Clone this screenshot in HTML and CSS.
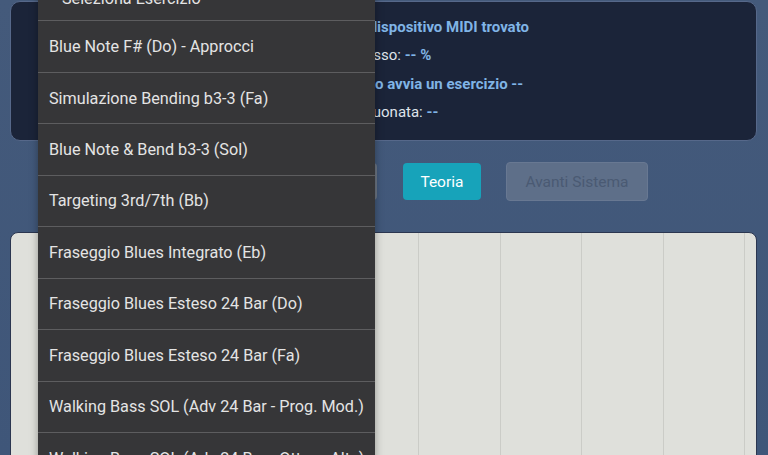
FILE: index.html
```html
<!DOCTYPE html>
<html lang="it">
<head>
<meta charset="utf-8">
<title>Blues Trainer</title>
<link rel="stylesheet" href="styles.css">
</head>
<body>
<div class="app">
  <section class="status-panel">
    <div class="status-lines">
      <p class="line status">Nessun dispositivo MIDI trovato</p>
      <p class="line info">Progresso: <span class="val">-- %</span></p>
      <p class="line status">-- Scegli o avvia un esercizio --</p>
      <p class="line info">Nota suonata: <span class="val">--</span></p>
    </div>
  </section>
  <div class="controls">
    <button class="btn btn-success">Avvia Esercizio</button>
    <button class="btn btn-secondary">Stop</button>
    <button class="btn btn-info">Teoria</button>
    <button class="btn btn-disabled" disabled>Avanti Sistema</button>
  </div>
  <section class="sheet">
    <div class="col"></div><div class="col"></div><div class="col"></div>
    <div class="col"></div><div class="col"></div><div class="col"></div>
    <div class="col"></div><div class="col"></div><div class="col"></div>
  </section>
</div>
<ul class="dropdown">
  <li class="opt">-- Seleziona Esercizio --</li>
  <li class="opt">Blue Note F# (Do) - Approcci</li>
  <li class="opt">Simulazione Bending b3-3 (Fa)</li>
  <li class="opt">Blue Note &amp; Bend b3-3 (Sol)</li>
  <li class="opt">Targeting 3rd/7th (Bb)</li>
  <li class="opt">Fraseggio Blues Integrato (Eb)</li>
  <li class="opt">Fraseggio Blues Esteso 24 Bar (Do)</li>
  <li class="opt">Fraseggio Blues Esteso 24 Bar (Fa)</li>
  <li class="opt">Walking Bass SOL (Adv 24 Bar - Prog. Mod.)</li>
  <li class="opt">Walking Bass SOL (Adv 24 Bar - Ottava Alta)</li>
</ul>
</body>
</html>
```

FILE: styles.css
```css
* { box-sizing: border-box; }
html, body {
  margin: 0;
  height: 455px;
  overflow: hidden;
}
body {
  background: linear-gradient(180deg, #445a7b 0%, #3f5679 100%);
  font-family: Roboto, "Noto Sans", sans-serif;
  position: relative;
}
.app {
  padding: 1px 11px 0 10px;
}
.status-panel {
  height: 140px;
  background: #1b2439;
  border: 1px solid #56688a;
  border-radius: 10px;
  padding: 11px 0 0 303px;
}
.line {
  margin: 0;
  font-size: 15px;
  line-height: 28.4px;
  color: #dfe3ea;
  white-space: nowrap;
}
.line.status {
  color: #80b4e6;
  font-weight: 700;
}
.line.info {
  padding-left: 15px;
}
.val {
  color: #80b4e6;
  font-weight: 700;
}
.controls {
  margin-top: 21px;
  height: 39px;
  display: flex;
  align-items: center;
  justify-content: flex-end;
  gap: 25px;
  padding-right: 109px;
}
.btn {
  font-family: Roboto, "Noto Sans", sans-serif;
  font-size: 15.5px;
  height: 37px;
  padding: 0 16px;
  border: 1px solid transparent;
  border-radius: 4px;
  color: #fff;
}
.btn-success { background: #28a745; }
.btn-secondary { background: #6c7684; }
.btn-info {
  background: #17a3ba;
  padding: 0 16.5px;
  margin-left: 1px;
}
.btn-disabled {
  height: 39px;
  padding: 0 18.5px;
  background: #5e6f89;
  border-color: #687892;
  color: #4a5a73;
}
.sheet {
  margin-top: 31px;
  height: 260px;
  background: #dfe0db;
  border: 1px solid #2b3650;
  border-radius: 8px;
  display: flex;
}
.col {
  flex: 0 0 81.6px;
  border-right: 1px solid #cbccc7;
}
.dropdown {
  position: absolute;
  left: 38px;
  top: -31px;
  width: 337px;
  margin: 0;
  padding: 0;
  list-style: none;
  background: #363638;
  box-shadow: 0 2px 8px rgba(0, 0, 0, 0.35);
}
.opt {
  height: 51.45px;
  display: flex;
  align-items: center;
  padding-left: 11px;
  font-size: 16.2px;
  color: #e4e4e4;
  white-space: nowrap;
  border-top: 1px solid #5d5d5f;
}
.opt:first-child {
  border-top: none;
  padding-top: 8px;
}
```
